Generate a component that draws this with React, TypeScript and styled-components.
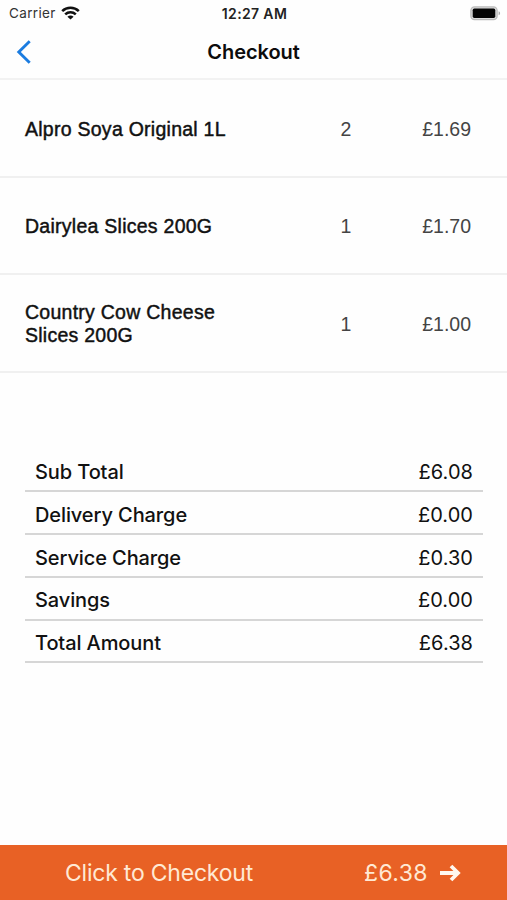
import React from "react";
import styled, { createGlobalStyle } from "styled-components";

const Global = createGlobalStyle`
  * { box-sizing: border-box; }
  body { margin: 0; background: #fefefe; }
`;

const Screen = styled.div`
  width: 507px;
  height: 900px;
  display: flex;
  flex-direction: column;
  overflow: hidden;
  background: #fefefe;
  color: #111;
  font-family: Inter, sans-serif;
`;

const StatusBar = styled.div`
  height: 26px;
  flex: none;
  display: grid;
  grid-template-columns: 1fr auto 1fr;
  align-items: center;
  padding: 0 6px 0 9px;
  font-size: 13.5px;
`;

const Carrier = styled.div`
  display: flex;
  align-items: center;
  gap: 5px;
  color: #333;
  letter-spacing: 0.35px;
`;

const Clock = styled.div`
  font-weight: 600;
  font-size: 14px;
  letter-spacing: 0.35px;
  margin-right: 1px;
  color: #222;
`;

const BatterySlot = styled.div`
  display: flex;
  justify-content: flex-end;
`;

const NavBar = styled.header`
  height: 54px;
  flex: none;
  display: grid;
  grid-template-columns: 60px 1fr 60px;
  align-items: center;
  border-bottom: 2px solid #f2f2f2;
`;

const BackButton = styled.button`
  border: 0;
  background: none;
  padding: 0 0 0 16px;
  display: flex;
`;

const Title = styled.h1`
  margin: 0;
  text-align: center;
  font-size: 20px;
  line-height: 24px;
  font-weight: 600;
  letter-spacing: -0.05px;
  color: #0c0c0c;
`;

const Item = styled.div`
  height: 97.5px;
  flex: none;
  display: grid;
  grid-template-columns: 220px 1fr 60px;
  align-items: center;
  padding: 3px 36px 0 25px;
  border-bottom: 2px solid #f0f0f0;
  font-family: "Liberation Sans", sans-serif;
  font-size: 19.5px;
  line-height: 23px;
`;

const ItemName = styled.div`
  letter-spacing: 0.26px;
  -webkit-text-stroke: 0.45px #111;
`;

const Quantity = styled.div`
  text-align: center;
  color: #444;
  padding-left: 36px;
`;

const Price = styled.div`
  text-align: right;
  color: #444;
`;

const Summary = styled.div`
  margin: 76.9px 24px 0 25px;
  flex: none;
`;

const SummaryRow = styled.div`
  height: 42.8px;
  display: flex;
  justify-content: space-between;
  align-items: center;
  padding: 4.5px 10px 0;
  border-bottom: 2px solid #d6d6d6;
  font-size: 20px;
`;

const Label = styled.span`
  font-weight: 500;
  letter-spacing: -0.1px;
`;

const Amount = styled.span`
  letter-spacing: 0.05px;
`;

const CheckoutBar = styled.button`
  margin: auto 0 0;
  height: 55px;
  flex: none;
  border: 0;
  width: 100%;
  display: flex;
  align-items: center;
  padding: 1px 46px 0 65px;
  background: #e86125;
  color: #ffe9d4;
  font-family: Inter, sans-serif;
  font-size: 23px;
  text-align: left;
`;

const CheckoutLabel = styled.span`
  flex: 1;
  letter-spacing: -0.22px;
`;

const CheckoutTotal = styled.span`
  margin-right: 12px;
  letter-spacing: 0.4px;
`;

const items = [
  { name: "Alpro Soya Original 1L", quantity: 2, price: "£1.69" },
  { name: "Dairylea Slices 200G", quantity: 1, price: "£1.70" },
  { name: "Country Cow Cheese Slices 200G", quantity: 1, price: "£1.00" },
];

const totals = [
  ["Sub Total", "£6.08"],
  ["Delivery Charge", "£0.00"],
  ["Service Charge", "£0.30"],
  ["Savings", "£0.00"],
  ["Total Amount", "£6.38"],
];

const WifiIcon = () => (
  <svg width="19" height="14" viewBox="0 0 19 14" fill="none" stroke="#111" strokeWidth="2.6">
    <path d="M1.2 5.1C5.8.7 13.2.7 17.8 5.1" />
    <path d="M4.2 8.4c3-2.8 7.6-2.8 10.6 0" />
    <path d="M9.5 13.6 6.4 10.7c1.8-1.5 4.4-1.5 6.2 0z" fill="#111" stroke="none" />
  </svg>
);

const BatteryIcon = () => (
  <svg width="31" height="15" viewBox="0 0 31 15">
    <rect x="0.9" y="0.9" width="26.2" height="12.7" rx="3.6" fill="#ddd" stroke="#bbb" strokeWidth="1.3" />
    <rect x="2.7" y="2.6" width="22.6" height="9.3" rx="1.6" fill="#050505" />
    <path d="M28.6 5.2c2 .7 2 3.4 0 4.1z" fill="#aaa" />
  </svg>
);

export default function App() {
  return (
    <>
      <Global />
      <Screen>
        <StatusBar>
          <Carrier>
            Carrier
            <WifiIcon />
          </Carrier>
          <Clock>12:27 AM</Clock>
          <BatterySlot>
            <BatteryIcon />
          </BatterySlot>
        </StatusBar>
        <NavBar>
          <BackButton aria-label="Back">
            <svg width="16" height="24" viewBox="0 0 16 24" fill="none" stroke="#1b7ce0" strokeWidth="2.9">
              <path d="M13.7 1.3 2.8 12l10.9 10.7" />
            </svg>
          </BackButton>
          <Title>Checkout</Title>
        </NavBar>
        {items.map((item) => (
          <Item key={item.name}>
            <ItemName>{item.name}</ItemName>
            <Quantity>{item.quantity}</Quantity>
            <Price>{item.price}</Price>
          </Item>
        ))}
        <Summary>
          {totals.map(([label, amount]) => (
            <SummaryRow key={label}>
              <Label>{label}</Label>
              <Amount>{amount}</Amount>
            </SummaryRow>
          ))}
        </Summary>
        <CheckoutBar>
          <CheckoutLabel>Click to Checkout</CheckoutLabel>
          <CheckoutTotal>£6.38</CheckoutTotal>
          <svg width="21" height="18" viewBox="0 0 21 18" fill="none" stroke="#fff8ef" strokeWidth="3.8">
            <path d="M0 9h17.5M11 2l7 7-7 7" />
          </svg>
        </CheckoutBar>
      </Screen>
    </>
  );
}
